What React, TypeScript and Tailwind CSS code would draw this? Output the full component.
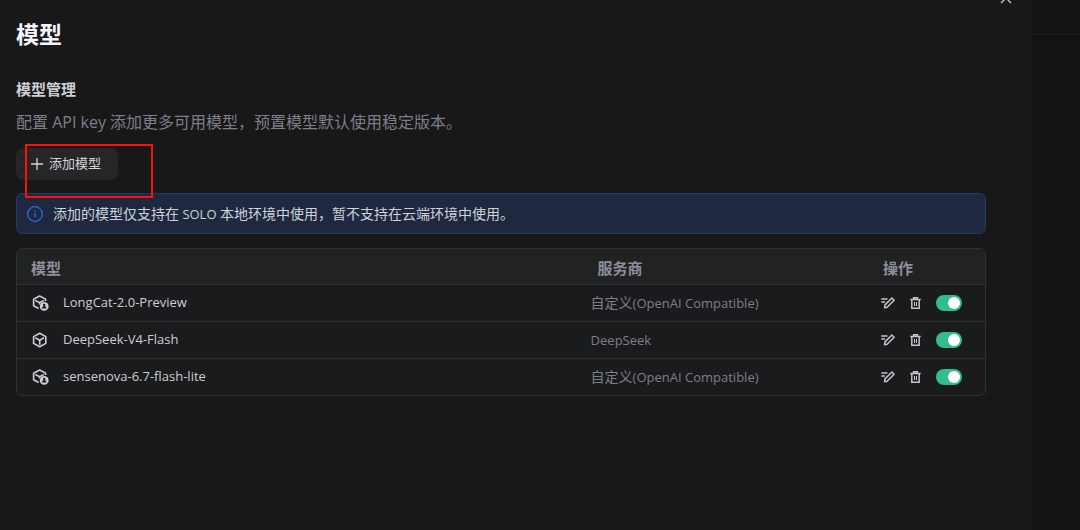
import { useState } from "react";

type Model = {
  name: string;
  provider: string;
  api?: string;
};

const models: Model[] = [
  { name: "LongCat-2.0-Preview", provider: "自定义", api: "(OpenAI Compatible)" },
  { name: "DeepSeek-V4-Flash", provider: "", api: "DeepSeek" },
  { name: "sensenova-6.7-flash-lite", provider: "自定义", api: "(OpenAI Compatible)" },
];

const CubeIcon = () => (
  <svg
    className="size-4"
    viewBox="0 0 16 16"
    fill="none"
    stroke="currentColor"
    strokeWidth="1.6"
    strokeLinejoin="round"
  >
    <path d="M7.7 1.2 13.8 4.6v6.8l-6.1 3.4-6.1-3.4V4.6z" />
    <path d="M3.4 5.8 7.7 8.2 12 5.8M7.7 8.2v4.6" />
  </svg>
);

const CustomCubeIcon = () => (
  <svg className="h-4 w-[17px]" viewBox="0 0 17 16" fill="none">
    <g stroke="currentColor" strokeWidth="1.6" strokeLinejoin="round">
      <path d="M13.6 6V4.1L7.6 1 1.6 4.2v6.6l5 2.7" />
      <path d="M3.2 5.4l4.4 2.4L12 5.4M7.6 7.8v1.6" />
    </g>
    <circle cx="12.2" cy="11.4" r="4.4" fill="currentColor" />
    <circle cx="12.2" cy="10" r="1.2" fill="#1a1b1c" />
    <path d="M10 13.5c0-1.5.8-2.5 2.2-2.5s2.2 1 2.2 2.5z" fill="#1a1b1c" />
  </svg>
);

const EditIcon = () => (
  <svg
    className="h-3 w-3.5"
    viewBox="0 0 14 12"
    fill="none"
    stroke="currentColor"
    strokeWidth="1.5"
  >
    <path d="M.3 2h6.2M.3 5h3.8" />
    <path d="M10.9 1 13.1 3.2l-7 7-2.5.5.4-2.8z" strokeLinejoin="round" />
  </svg>
);

const TrashIcon = () => (
  <svg
    className="h-3 w-[11px]"
    viewBox="0 0 11 12"
    fill="none"
    stroke="currentColor"
    strokeWidth="1.5"
  >
    <path d="M.3 2.6h10.4M3.6 2.4V.8h3.8v1.6M1.8 2.6v8.6h7.4V2.6" />
    <path d="M4.5 5v4M6.5 5v4" strokeWidth="1.1" />
  </svg>
);

const ModelRow = ({ model }: { model: Model }) => {
  const [enabled, setEnabled] = useState(true);

  return (
    <tr className="h-[37px] border-t border-[#2e2f31] text-[13px]">
      <td className="pl-[15px] text-[#cdced3]">
        <div className="flex items-center">
          <span className="flex w-[31px] shrink-0">
            {model.provider ? <CustomCubeIcon /> : <CubeIcon />}
          </span>
          {model.name}
        </div>
      </td>
      <td className="pt-px text-[#7e7e8a]">
        <span className="text-sm">{model.provider}</span>
        {model.api}
      </td>
      <td>
        <div className="flex items-center text-[#c4c5ca]">
          <button type="button" aria-label={`编辑 ${model.name}`} className="mr-[15px]">
            <EditIcon />
          </button>
          <button type="button" aria-label={`删除 ${model.name}`} className="mr-[15px]">
            <TrashIcon />
          </button>
          <input
            type="checkbox"
            role="switch"
            aria-label={`启用 ${model.name}`}
            checked={enabled}
            onChange={(e) => setEnabled(e.target.checked)}
            className="flex h-4 w-[26px] appearance-none items-center rounded-full bg-[#4b4c50] px-0.5 before:size-3 before:rounded-full before:bg-white checked:justify-end checked:bg-[#32bd8c]"
          />
        </div>
      </td>
    </tr>
  );
};

const App = () => {
  return (
    <div className="flex min-h-screen bg-[#181818] font-['Open_Sans','Noto_Sans_CJK_SC',sans-serif]">
      <main className="relative min-w-0 flex-1 pt-4 pr-[46px] pb-8 pl-4">
        <button
          type="button"
          aria-label="关闭"
          className="absolute -top-2 right-5 text-[#c4c5ca]"
        >
          <svg
            className="size-3"
            viewBox="0 0 12 12"
            fill="none"
            stroke="currentColor"
            strokeWidth="1.4"
          >
            <path d="M1 1l10 10M11 1 1 11" />
          </svg>
        </button>

        <h1 className="text-[23px] leading-9 font-bold text-[#f5f6fb]">模型</h1>

        <h2 className="mt-[23px] text-[15px] leading-7 font-bold text-[#cdced3]">
          模型管理
        </h2>
        <p className="mt-[5px] text-base leading-7 text-[#7e7e8a]">
          配置 API key 添加更多可用模型，预置模型默认使用稳定版本。
        </p>

        <div className="relative mt-3 w-fit">
          <button
            type="button"
            className="flex h-8 items-center gap-1.5 rounded-lg bg-[#262626] pr-[17px] pl-[15px] text-[13px] text-[#d4d5da]"
          >
            <svg
              className="size-3"
              viewBox="0 0 12 12"
              fill="none"
              stroke="currentColor"
              strokeWidth="1.3"
            >
              <path d="M6 0v12M0 6h12" />
            </svg>
            添加模型
          </button>
          <div className="pointer-events-none absolute -top-1 left-[9px] h-[54px] w-32 border-2 border-[#fb130a]" />
        </div>

        <div
          role="note"
          className="mt-[13px] flex h-[41px] items-center gap-2.5 rounded-md border border-[#203a69] bg-[#1e283e] px-2.5 text-sm text-[#cfd2da]"
        >
          <svg className="size-4 shrink-0" viewBox="0 0 16 16" fill="none" stroke="#2f6be0">
            <circle cx="8" cy="8" r="7.3" strokeWidth="1.3" />
            <path d="M8 7v4.6M8 4.2v1.5" strokeWidth="1.3" />
          </svg>
          <p>
            添加的模型仅支持在<span className="text-[13px]"> SOLO </span>
            本地环境中使用，暂不支持在云端环境中使用。
          </p>
        </div>

        <div className="mt-3.5 overflow-hidden rounded-md border border-[#2e2f31] bg-[#1a1b1c]">
          <table className="w-full table-fixed text-left text-sm">
            <thead>
              <tr className="h-[35px] bg-[#212322] text-[15px] text-[#8e8e9c]">
                <th className="pt-1 pl-3.5 font-bold">模型</th>
                <th className="w-[30%] pt-1 pl-[7px] font-bold">服务商</th>
                <th className="w-[104px] pt-1 pl-0.5 font-bold">操作</th>
              </tr>
            </thead>
            <tbody>
              {models.map((model) => (
                <ModelRow key={model.name} model={model} />
              ))}
            </tbody>
          </table>
        </div>
      </main>

      <aside className="w-12 shrink-0 bg-[#131313]">
        <div className="h-[35px] border-b-2 border-[#1a1a1a]" />
      </aside>
    </div>
  );
};

export default App;
